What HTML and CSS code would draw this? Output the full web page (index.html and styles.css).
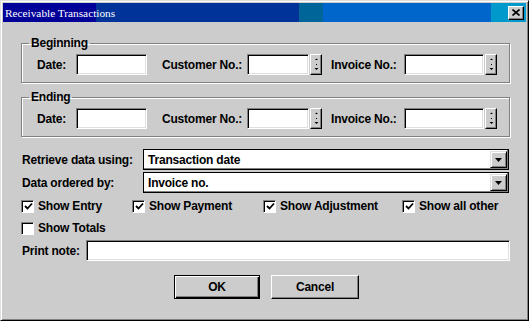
FILE: index.html
```html
<!DOCTYPE html>
<html lang="en">
<head>
  <meta charset="UTF-8">
  <title>Receivable Transactions</title>
  <link rel="stylesheet" href="styles.css">
</head>
<body>
  <div class="window">
    <div class="titlebar">
      <span class="title">Receivable Transactions</span>
      <span class="close">
        <svg width="8" height="7" viewBox="0 0 8 7"><path d="M0.5 0.5 L7.5 6.5 M7.5 0.5 L0.5 6.5" stroke="#000" stroke-width="1.6" fill="none"/></svg>
      </span>
    </div>
    <div class="content">
      <fieldset class="group">
        <legend>Beginning</legend>
        <div class="range-row">
          <span class="lbl lbl-date">Date:</span>
          <span class="text w-date"></span>
          <span class="lbl lbl-cust">Customer No.:</span>
          <span class="text w-cust"></span>
          <span class="spin"><svg width="5" height="15" viewBox="0 0 5 15"><path d="M1 3 H4 L2.5 1.5Z M2 7 H3 V8 H2Z M0.5 11 H4.5 L2.5 13Z" fill="#000"/></svg></span>
          <span class="lbl lbl-inv">Invoice No.:</span>
          <span class="text w-inv"></span>
          <span class="spin"><svg width="5" height="15" viewBox="0 0 5 15"><path d="M1 3 H4 L2.5 1.5Z M2 7 H3 V8 H2Z M0.5 11 H4.5 L2.5 13Z" fill="#000"/></svg></span>
        </div>
      </fieldset>
      <fieldset class="group group-second">
        <legend>Ending</legend>
        <div class="range-row">
          <span class="lbl lbl-date">Date:</span>
          <span class="text w-date"></span>
          <span class="lbl lbl-cust">Customer No.:</span>
          <span class="text w-cust"></span>
          <span class="spin"><svg width="5" height="15" viewBox="0 0 5 15"><path d="M1 3 H4 L2.5 1.5Z M2 7 H3 V8 H2Z M0.5 11 H4.5 L2.5 13Z" fill="#000"/></svg></span>
          <span class="lbl lbl-inv">Invoice No.:</span>
          <span class="text w-inv"></span>
          <span class="spin"><svg width="5" height="15" viewBox="0 0 5 15"><path d="M1 3 H4 L2.5 1.5Z M2 7 H3 V8 H2Z M0.5 11 H4.5 L2.5 13Z" fill="#000"/></svg></span>
        </div>
      </fieldset>

      <div class="field-row first-field">
        <span class="field-label">Retrieve data using:</span>
        <span class="combo">
          <span class="combo-text">Transaction date</span>
          <span class="drop"><svg width="7" height="4" viewBox="0 0 7 4"><path d="M0 0 H7 L3.5 4Z" fill="#000"/></svg></span>
        </span>
      </div>
      <div class="field-row">
        <span class="field-label">Data ordered by:</span>
        <span class="combo">
          <span class="combo-text">Invoice no.</span>
          <span class="drop"><svg width="7" height="4" viewBox="0 0 7 4"><path d="M0 0 H7 L3.5 4Z" fill="#000"/></svg></span>
        </span>
      </div>

      <div class="checks">
        <label class="check"><span class="box"><svg width="9" height="9" viewBox="0 0 9 9"><path d="M1 4 L3.5 6.5 L8 1.5" stroke="#000" stroke-width="1.8" fill="none"/></svg></span>Show Entry</label>
        <label class="check"><span class="box"><svg width="9" height="9" viewBox="0 0 9 9"><path d="M1 4 L3.5 6.5 L8 1.5" stroke="#000" stroke-width="1.8" fill="none"/></svg></span>Show Payment</label>
        <label class="check"><span class="box"><svg width="9" height="9" viewBox="0 0 9 9"><path d="M1 4 L3.5 6.5 L8 1.5" stroke="#000" stroke-width="1.8" fill="none"/></svg></span>Show Adjustment</label>
        <label class="check"><span class="box"><svg width="9" height="9" viewBox="0 0 9 9"><path d="M1 4 L3.5 6.5 L8 1.5" stroke="#000" stroke-width="1.8" fill="none"/></svg></span>Show all other</label>
      </div>
      <div class="checks checks-single">
        <label class="check"><span class="box"></span>Show Totals</label>
      </div>

      <div class="field-row note-row">
        <span class="note-label">Print note:</span>
        <span class="text w-note"></span>
      </div>

      <div class="buttons">
        <span class="btn btn-default">OK</span>
        <span class="btn btn-cancel">Cancel</span>
      </div>
    </div>
  </div>
</body>
</html>
```

FILE: styles.css
```css
body {
  margin: 0;
  padding: 0;
  background: #cccccc;
}
.window {
  width: 529px;
  height: 321px;
  box-sizing: border-box;
  border: 1px solid;
  border-color: #dfdfdf #000 #000 #dfdfdf;
  box-shadow: inset 1px 1px #fff, inset -1px -1px #808080;
  padding: 2px;
  background: #cccccc;
  font-family: "Liberation Sans", Arial, sans-serif;
  font-size: 12px;
  font-weight: bold;
  letter-spacing: -0.2px;
  color: #000;
}
.titlebar {
  height: 19px;
  display: flex;
  align-items: center;
  padding-left: 2px;
  background: linear-gradient(to right,
    #000099 0, #000099 93px,
    #003399 93px, #003399 296px,
    #006699 296px, #006699 320px,
    #0066cc 320px, #0066cc 488px,
    #0099cc 488px);
}
.title {
  color: #fff;
  font-family: "Liberation Serif", "Times New Roman", serif;
  font-weight: normal;
  font-size: 11.3px;
  letter-spacing: 0;
}
.close {
  margin-left: auto;
  margin-right: 2px;
  width: 16px;
  height: 14px;
  box-sizing: border-box;
  background: #cccccc;
  border: 1px solid;
  border-color: #fff #000 #000 #fff;
  box-shadow: inset -1px -1px #808080;
  display: flex;
  align-items: center;
  justify-content: center;
}
.content {
  padding: 14px 16px 0 18px;
}

/* group boxes */
.group {
  margin: 0;
  padding: 4px 0 7px 15px;
  border: 1px solid #808080;
  box-shadow: inset 1px 1px #fff, 1px 1px #fff;
  min-width: 0;
}
.group legend {
  padding: 0 2px;
  margin-left: -8px;
  line-height: 14px;
}
.group-second {
  margin-top: 7px;
}
.range-row {
  display: flex;
  align-items: center;
}
.lbl-date { width: 39px; }
.lbl-cust { width: 85px; margin-left: 15px; }
.lbl-inv { width: 73px; margin-left: 9px; }

.text {
  display: block;
  height: 21px;
  box-sizing: border-box;
  background: #fff;
  border: 1px solid;
  border-color: #808080 #fff #fff #808080;
  box-shadow: inset 1px 1px #000, inset -1px -1px #dfdfdf;
}
.w-date { width: 71px; }
.w-cust { width: 62px; }
.w-inv { width: 80px; }
.w-note { width: 424px; }

.spin {
  width: 12px;
  height: 21px;
  margin-left: 1px;
  box-sizing: border-box;
  background: #cccccc;
  border: 1px solid;
  border-color: #fff #000 #000 #fff;
  box-shadow: inset -1px -1px #808080;
  display: flex;
  align-items: center;
  justify-content: center;
}

/* combo rows */
.field-row {
  display: flex;
  align-items: center;
  padding-left: 1px;
  margin-top: 2px;
}
.first-field {
  margin-top: 12px;
}
.field-label {
  width: 121px;
}
.combo {
  width: 366px;
  height: 21px;
  box-sizing: border-box;
  border: 1px solid #000;
  box-shadow: inset -1px -1px #808080;
  background: #fff;
  display: flex;
  align-items: center;
}
.combo-text {
  flex: 1;
  padding-left: 4px;
}
.drop {
  width: 17px;
  height: 17px;
  margin-right: 1px;
  box-sizing: border-box;
  background: #cccccc;
  border: 1px solid;
  border-color: #dfdfdf #000 #000 #dfdfdf;
  box-shadow: inset 1px 1px #fff, inset -1px -1px #808080;
  display: flex;
  align-items: center;
  justify-content: center;
}

/* check boxes */
.checks {
  display: grid;
  grid-template-columns: 111px 131px 139px auto;
  height: 16px;
  margin-top: 5px;
}
.checks-single {
  margin-top: 6px;
}
.check {
  display: flex;
  align-items: center;
}
.box {
  width: 13px;
  height: 13px;
  box-sizing: border-box;
  margin-right: 4px;
  background: #fff;
  border: 1px solid;
  border-color: #808080 #fff #fff #808080;
  box-shadow: inset 1px 1px #000;
  display: flex;
  align-items: center;
  justify-content: center;
  padding: 1px 0 0 1px;
}

.note-row {
  margin-top: 4px;
}
.note-label {
  width: 64px;
}

/* buttons */
.buttons {
  display: flex;
  justify-content: center;
  gap: 11px;
  margin-top: 14px;
  padding-left: 2px;
}
.btn {
  height: 24px;
  box-sizing: border-box;
  display: flex;
  align-items: center;
  justify-content: center;
  background: #cccccc;
}
.btn-default {
  width: 86px;
  border: 1px solid #000;
  box-shadow: inset 1px 1px #fff, inset -1px -1px #000, inset -2px -2px #808080;
}
.btn-cancel {
  width: 88px;
  border: 1px solid;
  border-color: #fff #000 #000 #fff;
  box-shadow: inset -1px -1px #808080;
}
```
